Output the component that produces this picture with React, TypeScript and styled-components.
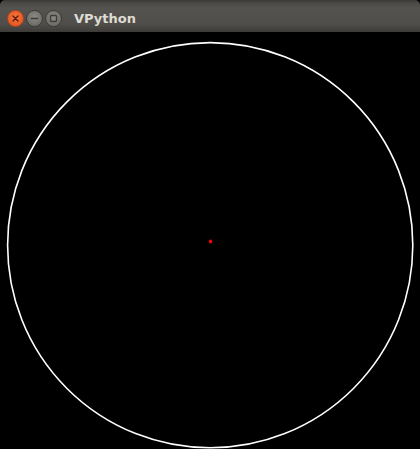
import React from "react";
import styled, { createGlobalStyle } from "styled-components";

const Global = createGlobalStyle`
  html, body { margin: 0; padding: 0; background: #000; }
  body { width: 420px; height: 449px; overflow: hidden; }
`;

const Window = styled.div`
  width: 420px;
  height: 449px;
  display: flex;
  flex-direction: column;
  background: #000;
`;

const TitleBar = styled.div`
  height: 32px;
  flex: none;
  display: flex;
  align-items: center;
  padding: 5px 0 0 7px;
  box-sizing: border-box;
  border-radius: 5px 5px 0 0;
  background: linear-gradient(#3a3935 0px, #4a4945 3px, #55534f 8px, #4f4e4a 24px, #3c3b37 32px);
`;

const Buttons = styled.div`
  display: flex;
  gap: 2px;
  align-items: center;
`;

const WinButton = styled.div<{ $close?: boolean }>`
  width: 17px;
  height: 17px;
  border-radius: 50%;
  display: flex;
  align-items: center;
  justify-content: center;
  box-sizing: border-box;
  border: 1px solid ${(p) => (p.$close ? "#b5411d" : "#3b3a36")};
  background: ${(p) =>
    p.$close
      ? "radial-gradient(circle at 50% 40%, #f7763f, #e45a24 70%)"
      : "radial-gradient(circle at 50% 40%, #8c8a84, #6f6d67 70%)"};
`;

const Title = styled.div`
  margin-left: 12px;
  font-family: "DejaVu Sans", "Open Sans", sans-serif;
  font-weight: bold;
  font-size: 13px;
  color: #dfdbd2;
`;

const Canvas = styled.div`
  flex: 1;
  background: #000;
  display: flex;
`;

export default function App() {
  return (
    <>
      <Global />
      <Window>
        <TitleBar>
          <Buttons>
            <WinButton $close>
              <svg width="9" height="9" viewBox="0 0 9 9">
                <path d="M2 2 L7 7 M7 2 L2 7" stroke="#5a1a08" strokeWidth="1.4" strokeLinecap="round" />
              </svg>
            </WinButton>
            <WinButton>
              <svg width="9" height="9" viewBox="0 0 9 9">
                <path d="M1.5 4.5 L7.5 4.5" stroke="#3c3b37" strokeWidth="1.6" strokeLinecap="round" />
              </svg>
            </WinButton>
            <WinButton>
              <svg width="9" height="9" viewBox="0 0 9 9">
                <rect x="1.5" y="1.5" width="6" height="6" rx="1" fill="none" stroke="#3c3b37" strokeWidth="1.3" />
              </svg>
            </WinButton>
          </Buttons>
          <Title>VPython</Title>
        </TitleBar>
        <Canvas>
          <svg width="420" height="417" viewBox="0 32 420 417">
            <circle cx="210.2" cy="245.2" r="202.6" fill="none" stroke="#fff" strokeWidth="1.6" />
            <ellipse cx="210.5" cy="241.5" rx="1.6" ry="2" fill="#ff0000" />
          </svg>
        </Canvas>
      </Window>
    </>
  );
}
